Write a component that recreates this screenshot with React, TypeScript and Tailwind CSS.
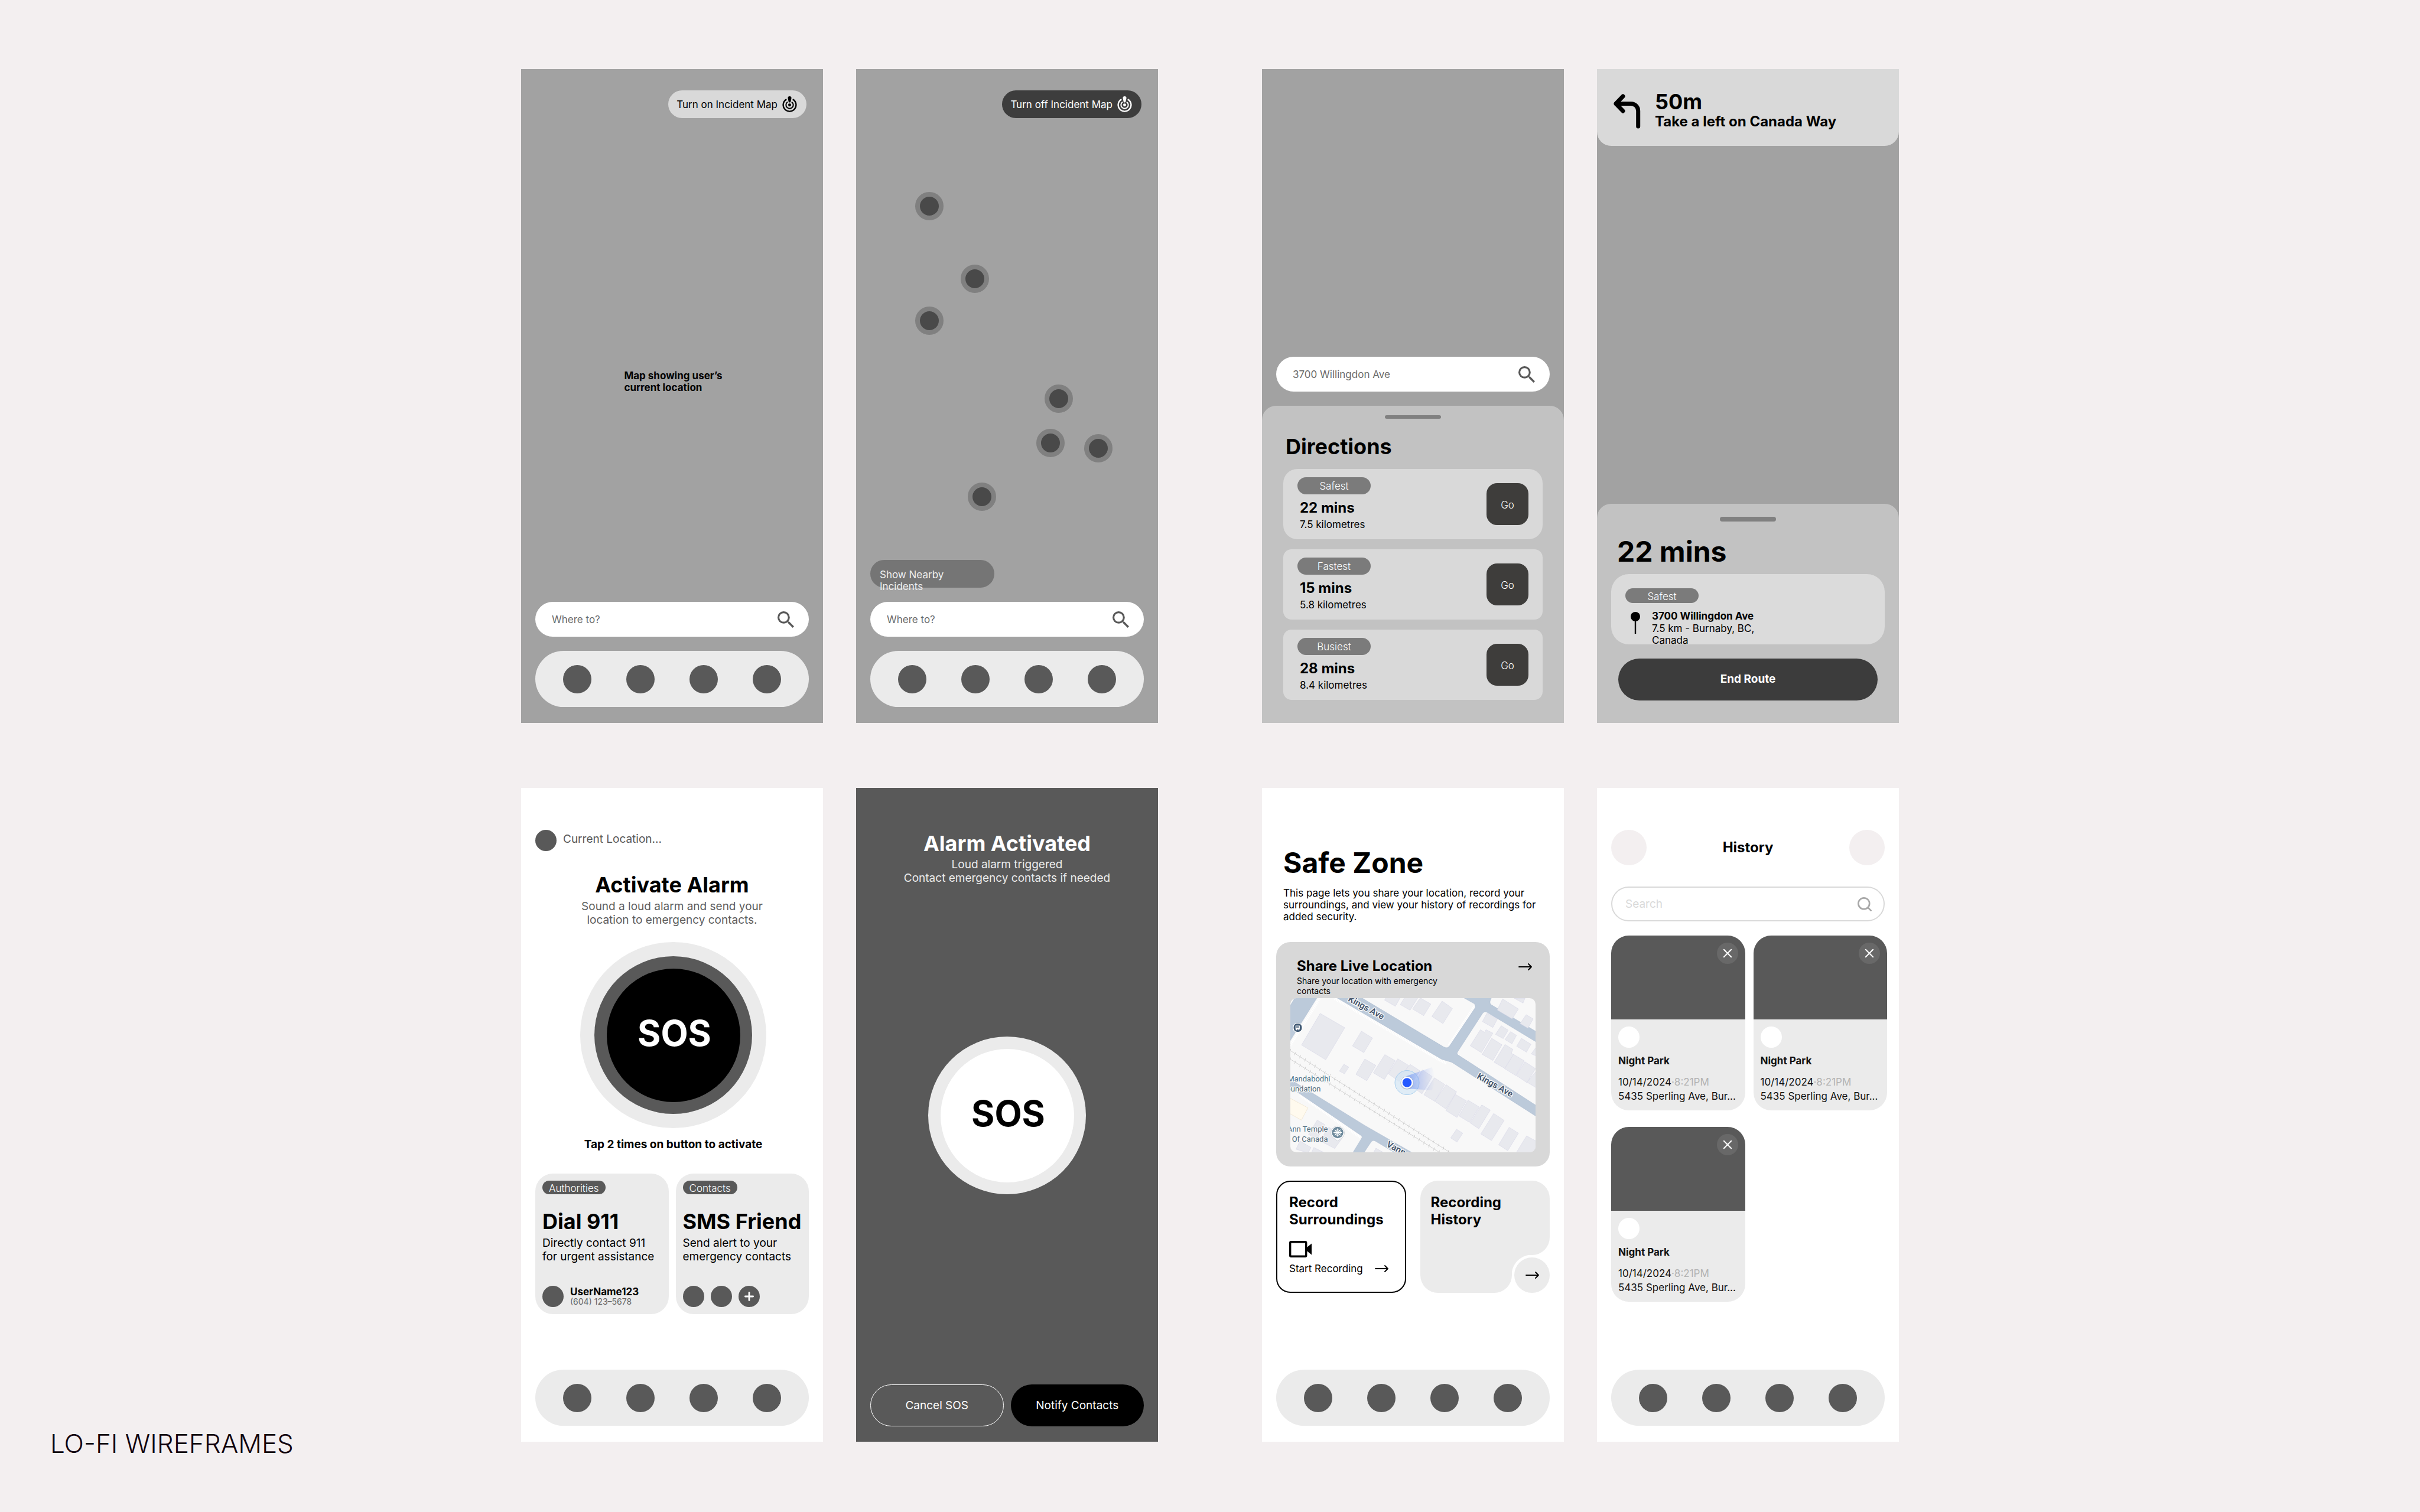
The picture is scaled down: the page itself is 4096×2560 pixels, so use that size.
import type { ReactNode } from "react";

function SearchIcon({ className }: { className: string }) {
  return (
    <svg viewBox="3 3 17.5 17.5" className={className} fill="currentColor" aria-hidden="true">
      <path d="M15.5 14h-.79l-.28-.27A6.47 6.47 0 0 0 16 9.5 6.5 6.5 0 1 0 9.5 16c1.61 0 3.09-.59 4.23-1.57l.27.28v.79l5 4.99L20.49 19l-4.99-5zm-6 0C7.01 14 5 11.99 5 9.5S7.01 5 9.5 5 14 7.01 14 9.5 11.99 14 9.5 14z" />
    </svg>
  );
}

function IncidentIcon() {
  return (
    <svg viewBox="-52 -62 104 114" className="h-[27px] w-[25px] shrink-0" fill="none" stroke="currentColor" aria-hidden="true">
      <path d="M22 -40.4A46 46 0 1 1 -22 -40.4" strokeWidth="10" />
      <path d="M14 -21.9A26 26 0 1 1 -14 -21.9" strokeWidth="8.5" />
      <circle r="10.5" fill="currentColor" stroke="none" />
      <path d="M-13 -49a13 12.5 0 0 1 26 0L7.5 -23q-1.5 5.500-7.500 5.500t-7.500-5.500z" fill="currentColor" stroke="none" />
    </svg>
  );
}

function ArrowRight() {
  return (
    <svg viewBox="0 0 23 12" className="h-3 w-[23px] shrink-0" fill="none" stroke="black" strokeWidth="1.8" strokeLinecap="round" strokeLinejoin="round" aria-hidden="true">
      <path d="M1 6h21M17 1l5 5-5 5" />
    </svg>
  );
}

function Pair({ children }: { children: ReactNode }) {
  return <div className="grid grid-cols-2 gap-14">{children}</div>;
}

function Phone({ label, tone, children }: { label: string; tone: string; children: ReactNode }) {
  return (
    <section aria-label={label} className={`relative flex min-h-[1107px] flex-col ${tone}`}>
      {children}
    </section>
  );
}

function NavBar() {
  return (
    <nav aria-label="Primary" className="flex h-[95px] items-center justify-between rounded-full bg-[#ebebeb] px-[47px]">
      {["Home", "Map", "Alarm", "Profile"].map((name) => (
        <button key={name} type="button" aria-label={name} className="size-12 rounded-full bg-[#595959]" />
      ))}
    </nav>
  );
}

function SearchBar({ value }: { value?: string }) {
  return (
    <div className="flex h-[59px] items-center gap-3 rounded-full bg-white pr-[25px] pl-[28px]">
      <input
        type="text"
        aria-label="Destination"
        placeholder="Where to?"
        defaultValue={value}
        className="w-full min-w-0 bg-transparent text-[17px] leading-5 text-[#6b6b6b] outline-none placeholder:text-[#6b6b6b]"
      />
      <button type="button" aria-label="Search" className="shrink-0 text-[#595959]">
        <SearchIcon className="size-7" />
      </button>
    </div>
  );
}

function IncidentToggle({ text, tone }: { text: string; tone: string }) {
  return (
    <div className="flex justify-end pt-9 pr-7">
      <button type="button" className={`flex h-[47px] items-center gap-2 rounded-full pr-4 pl-[14px] text-[17px] leading-5 ${tone}`}>
        {text}
        <IncidentIcon />
      </button>
    </div>
  );
}

const incidents = [
  { x: 124, y: 232 },
  { x: 201, y: 355 },
  { x: 124, y: 426 },
  { x: 343, y: 558 },
  { x: 329, y: 633 },
  { x: 410, y: 642 },
  { x: 213, y: 724 },
];

function MapScreen() {
  return (
    <Phone label="Map" tone="bg-[#a2a2a2]">
      <IncidentToggle text="Turn on Incident Map" tone="bg-[#d9d9d9] text-black" />
      <p className="mx-auto mt-[426px] pl-1 text-[17px] leading-5 font-bold">
        Map showing user’s
        <br />
        current location
      </p>
      <div className="mt-auto flex flex-col gap-6 px-6 pb-[27px]">
        <SearchBar />
        <NavBar />
      </div>
    </Phone>
  );
}

function IncidentScreen() {
  return (
    <Phone label="Incident map" tone="bg-[#a2a2a2]">
      <IncidentToggle text="Turn off Incident Map" tone="bg-[#3d3d3d] text-white" />
      {incidents.map((p) => (
        <span
          key={`${p.x}-${p.y}`}
          className="absolute size-12 -translate-1/2 rounded-full border-8 border-[#808080] bg-[#494949]"
          style={{ left: p.x, top: p.y }}
        />
      ))}
      <div className="mt-auto flex flex-col gap-6 px-6 pb-[27px]">
        <button type="button" className="h-[47px] w-[210px] rounded-full bg-[#757575] px-4 pt-[2px] text-left text-[17px] leading-5 text-[#efefef]">
          <span className="block h-5">
            Show Nearby
            <br />
            Incidents
          </span>
        </button>
        <SearchBar />
        <NavBar />
      </div>
    </Phone>
  );
}

function RouteTag({ children, className }: { children: ReactNode; className: string }) {
  return (
    <span className={`flex w-[124px] items-center justify-center rounded-full bg-[#7b7b7b] pt-[2px] text-[17px] leading-5 font-light text-white ${className}`}>
      {children}
    </span>
  );
}

function RouteCard({ tag, time, distance, round }: { tag: string; time: string; distance: string; round: string }) {
  return (
    <li className={`flex h-[119px] items-center justify-between bg-[#d9d9d9] px-6 ${round}`}>
      <div className="flex flex-col">
        <RouteTag className="h-[29px]">{tag}</RouteTag>
        <strong className="mt-2 pl-1 text-[24px] leading-[30px]">{time}</strong>
        <span className="pt-[1px] pl-1 text-[17px] leading-6">{distance}</span>
      </div>
      <button type="button" aria-label={`Go, ${tag}`} className="size-[71px] rounded-[18px] bg-[#3e3d3b] pt-[2px] text-[17px] leading-5 font-light text-white">
        Go
      </button>
    </li>
  );
}

function DirectionsScreen() {
  return (
    <Phone label="Directions" tone="bg-[#a2a2a2]">
      <div className="mt-auto px-6 pb-6">
        <SearchBar value="3700 Willingdon Ave" />
      </div>
      <div className="rounded-t-[24px] bg-[#c2c2c2] px-9 pt-4 pb-[39px]">
        <div className="mx-auto h-[6px] w-[95px] rounded-full bg-[#808080]" />
        <h2 className="mt-[25px] pl-1 text-[36px] leading-[44px] font-bold">Directions</h2>
        <ul className="mt-4 flex flex-col gap-[17px]">
          <RouteCard tag="Safest" time="22 mins" distance="7.5 kilometres" round="rounded-[24px]" />
          <RouteCard tag="Fastest" time="15 mins" distance="5.8 kilometres" round="rounded-[14px]" />
          <RouteCard tag="Busiest" time="28 mins" distance="8.4 kilometres" round="rounded-[14px]" />
        </ul>
      </div>
    </Phone>
  );
}

function NavigationScreen() {
  return (
    <Phone label="Navigation" tone="bg-[#a2a2a2]">
      <header className="flex h-[130px] items-center gap-6 rounded-b-[24px] bg-[#d9d9d9] pt-5 pr-6 pb-2 pl-7">
        <svg viewBox="0 0 46 59" className="h-[59px] w-[46px] shrink-0" fill="none" stroke="black" strokeWidth="7" strokeLinecap="round" strokeLinejoin="round" aria-label="Turn left">
          <path d="M16 4L4 16.500L16 29M4 16.500H29.500a12.200 12.200 0 0 1 12.200 12.200V55" />
        </svg>
        <div className="pb-[2px] font-bold">
          <p className="text-[36px] leading-[38px]">50m</p>
          <p className="text-[24px] leading-[30px]">Take a left on Canada Way</p>
        </div>
      </header>
      <div className="mt-auto rounded-t-[24px] bg-[#c2c2c2] px-6 pt-[22px] pb-[38px]">
        <div className="mx-auto h-[8px] w-[95px] rounded-full bg-[#808080]" />
        <h2 className="mt-[23px] pl-[10px] text-[48px] leading-[56px] font-bold">22 mins</h2>
        <div className="mt-[10px] h-[119px] rounded-[30px] bg-[#dbdbdb] px-6 pt-6">
          <RouteTag className="h-[25px]">Safest</RouteTag>
          <div className="mt-[11px] flex gap-[20px] pl-[9px]">
            <svg viewBox="0 0 16 40" className="mt-1 h-10 w-4 shrink-0" aria-hidden="true">
              <circle cx="8" cy="8" r="8" />
              <rect x="6.800" y="12" width="2.400" height="25" />
            </svg>
            <div className="w-[180px] text-[17px] leading-5">
              <strong className="block leading-[22px] whitespace-nowrap">3700 Willingdon Ave</strong>
              <p>7.5 km - Burnaby, BC, Canada</p>
            </div>
          </div>
        </div>
        <div className="px-3 pt-6">
          <button type="button" className="h-[71px] w-full rounded-full bg-[#3c3c3c] pb-[2px] text-[19px] leading-6 font-bold text-white">
            End Route
          </button>
        </div>
      </div>
    </Phone>
  );
}

function ActionCard({ tag, title, children, footer }: { tag: string; title: string; children: ReactNode; footer: ReactNode }) {
  return (
    <article className="flex h-[238px] flex-col items-start rounded-[30px] bg-[#ebebeb] p-3">
      <span className="flex h-[23px] items-center rounded-full bg-[#595959] px-[11px] pt-[2px] text-[17px] leading-5 font-light text-white">{tag}</span>
      <h3 className="mt-6 text-[36px] leading-[44px] font-bold whitespace-nowrap">{title}</h3>
      <p className="mt-[3px] text-[19px] leading-[23px] whitespace-nowrap">{children}</p>
      <div className="mt-auto flex items-center gap-[11px]">{footer}</div>
    </article>
  );
}

function AlarmScreen() {
  return (
    <Phone label="Activate alarm" tone="bg-white">
      <div className="flex gap-[11px] pt-[71px] pl-6">
        <span className="size-9 rounded-full bg-[#595959]" />
        <p className="pt-1 text-[19px] leading-6 text-[#595959]">Current Location...</p>
      </div>
      <div className="mt-[35px] text-center">
        <h2 className="text-[36px] leading-[44px] font-bold">Activate Alarm</h2>
        <p className="mt-[3px] text-[19px] leading-[23px] text-[#5e5e5e]">
          Sound a loud alarm and send your
          <br />
          location to emergency contacts.
        </p>
      </div>
      <div className="mt-[26px] flex flex-col items-center pl-1">
        <button type="button" className="flex size-[315px] items-center justify-center rounded-full bg-[#ebebeb]">
          <span className="flex size-[267px] items-center justify-center rounded-full bg-[#595959]">
            <span className="flex size-[226px] items-center justify-center rounded-full bg-black pb-2 pl-1 text-[60px] font-bold text-white">
              SOS
            </span>
          </span>
        </button>
        <p className="mt-4 text-[19px] leading-6 font-bold">Tap 2 times on button to activate</p>
      </div>
      <div className="mt-[37px] grid grid-cols-2 gap-3 px-6">
        <ActionCard
          tag="Authorities"
          title="Dial 911"
          footer={
            <>
              <span className="size-9 rounded-full bg-[#595959]" />
              <div>
                <p className="text-[17px] leading-[18px] font-bold">UserName123</p>
                <p className="text-[14px] leading-4 text-[#666666]">(604) 123–5678</p>
              </div>
            </>
          }
        >
          Directly contact 911
          <br />
          for urgent assistance
        </ActionCard>
        <ActionCard
          tag="Contacts"
          title="SMS Friend"
          footer={
            <>
              <span className="size-9 rounded-full bg-[#595959]" />
              <span className="size-9 rounded-full bg-[#595959]" />
              <button type="button" aria-label="Add contact" className="flex size-9 items-center justify-center rounded-full bg-[#595959]">
                <svg viewBox="0 0 16 16" className="size-4" stroke="white" strokeWidth="2.800" strokeLinecap="round" aria-hidden="true">
                  <path d="M8 1.400v13.200M1.400 8h13.200" />
                </svg>
              </button>
            </>
          }
        >
          Send alert to your
          <br />
          emergency contacts
        </ActionCard>
      </div>
      <div className="mt-auto px-6 pb-[27px]">
        <NavBar />
      </div>
    </Phone>
  );
}

function AlarmActivatedScreen() {
  return (
    <Phone label="Alarm activated" tone="bg-[#595959]">
      <div className="pt-[72px] text-center text-white">
        <h2 className="text-[36px] leading-[44px] font-bold">Alarm Activated</h2>
        <p className="mt-[2px] text-[19px] leading-[23px] text-[#ebebeb]">
          Loud alarm triggered
          <br />
          Contact emergency contacts if needed
        </p>
      </div>
      <div className="mt-[257px] flex justify-center">
        <div className="flex size-[267px] items-center justify-center rounded-full bg-[#ebebeb]">
          <div className="flex size-[226px] items-center justify-center rounded-full bg-white pb-2 pl-1 text-[60px] font-bold text-black">
            SOS
          </div>
        </div>
      </div>
      <div className="mt-auto grid grid-cols-2 gap-3 px-6 pb-[26px] text-[19px] leading-6 text-white">
        <button type="button" className="h-[71px] rounded-full border border-white">
          Cancel SOS
        </button>
        <button type="button" className="h-[71px] rounded-full bg-black">
          Notify Contacts
        </button>
      </div>
    </Phone>
  );
}

const buildings = [
  "302,364 426,422 330,552 208,492",
  "510,436 566,464 522,523 465,496",
  "527,549 583,575 537,637 482,611",
  "422,570 446,582 424,609 399,598",
  "628,531 681,556 626,632 570,605",
  "693,548 748,575 700,640 646,609",
  "756,571 806,597 760,650 706,620",
  "817,593 867,620 815,690 768,662",
  "878,625 930,652 880,721 825,694",
  "937,653 990,682 936,752 880,720",
  "983,692 1040,719 992,786 936,758",
  "1048,716 1105,744 1055,806 1002,780",
  "1117,735 1160,756 1102,832 1058,808",
  "1177,770 1230,798 1166,880 1112,853",
  "1255,826 1302,850 1248,921 1202,897",
  "990,834 1021,850 992,886 960,869",
  "1343,861 1400,886 1372,940 1290,930",
  "640,290 706,300 681,335 627,310",
  "735,290 795,300 755,351 706,328",
  "807,301 860,326 824,373 768,346",
  "917,314 969,344 921,405 865,376",
  "1222,305 1302,346 1270,386 1195,350",
  "1280,302 1335,302 1325,322",
  "1341,369 1376,386 1350,424 1310,405",
  "1143,363 1196,386 1173,421 1120,397",
  "1215,414 1250,432 1225,466 1186,449",
  "1262,438 1292,453 1269,487 1234,470",
  "1317,465 1365,489 1342,521 1293,497",
  "1400,490 1400,540 1367,528",
  "1110,430 1131,441 1138,430 1173,444 1115,523 1059,495",
  "1167,465 1219,491 1173,555 1119,530",
  "1234,490 1274,510 1266,525 1278,532 1235,588 1179,562",
  "1277,530 1331,556 1288,616 1232,588",
  "1334,560 1388,588 1345,645 1291,616",
  "1400,590 1400,670 1345,643",
  "287,797 325,815 285,875 243,855",
  "345,826 420,862 375,912 300,880",
  "200,882 256,908 240,930 180,915",
  "270,908 320,928 255,935",
  "583,911 620,928 570,930",
];

function LocationMap() {
  return (
    <svg viewBox="0 0 416 261" preserveAspectRatio="xMidYMid slice" className="block h-[261px] w-full rounded-[10px] bg-[#f8f8f8]" role="img" aria-label="Map around Kings Ave">
      <defs>
        <linearGradient id="beam" x1="0" x2="1" y1="0" y2="0">
          <stop offset="0" stopColor="#5b83f5" stopOpacity="0.6" />
          <stop offset="1" stopColor="#8fa8f0" stopOpacity="0" />
        </linearGradient>
      </defs>
      <g transform="scale(0.3356 0.41725) translate(-150 -302)">
        <g fill="none" stroke="#ffffff" strokeWidth="12" strokeDasharray="5 3">
          <path d="M375 304L912 556L940 566M1080 335L950 496" />
          <path d="M995 535L1388 748M300 302L150 495M200 695L506 868" />
        </g>
        <g fill="#bccada" stroke="#a9bacf" strokeWidth="1.500">
          <path d="M385 300L915 550L965 562L1392 782V738L995 531Q990 526 995 520L1120 365Q1130 353 1145 360L1392 480V438L1163 328Q1152 320 1166 300H1025L1080 325Q1088 333 1082 343L955 495Q945 508 925 500L510 300Z" />
          <path d="M175 300H286L148 478V336Z" />
          <path d="M148 630L530 820L768 930H680L578 881Q568 877 560 884L522 930H466L513 868Q515 862 506 858L148 662Z" />
        </g>
        <g fill="#e8e9ee" stroke="#d4d5e6" strokeWidth="1.500">
          {buildings.map((points) => (
            <polygon key={points} points={points} />
          ))}
        </g>
        <polygon points="148,707 240,747 207,797 148,770" fill="#fffaee" stroke="#eadcc0" strokeWidth="1.500" />
        <g fill="none" stroke="#c4c4c4">
          <path d="M150 514L960 930M150 549L908 930" strokeWidth="2" />
          <path d="M150 514L960 930M150 549L908 930" strokeWidth="14" strokeDasharray="2 26" />
        </g>
      </g>
      <circle cx="198" cy="143" r="20.500" fill="#cfe4f5" fillOpacity="0.600" stroke="#a6cdee" />
      <path d="M197 132L240 117Q250 138 240 156L197 153Z" fill="url(#beam)" />
      <circle cx="198" cy="143.500" r="11" fill="#8a93a5" fillOpacity="0.500" />
      <circle cx="198" cy="143" r="10.200" fill="white" />
      <circle cx="198" cy="143" r="7.800" fill="#2559ff" />
      <g stroke="#f8f8f8" strokeWidth="3" strokeLinejoin="round" style={{ paintOrder: "stroke" }} className="font-[Roboto,sans-serif]">
        <g fill="#43546c" fontSize="15" fontWeight="600" textAnchor="middle">
          <text x="129" y="21" transform="rotate(29 129 16)">Kings Ave</text>
          <text x="347" y="152" transform="rotate(29 347 147)">Kings Ave</text>
          <text x="190" y="265" transform="rotate(29 190 260)">Vanness</text>
        </g>
        <g fill="#4c6b80" fontSize="13" textAnchor="end">
          <text x="68" y="141">Mandabodhi</text>
          <text x="52" y="158">Foundation</text>
          <text x="64" y="226">Ann Temple</text>
          <text x="64" y="243">Of Canada</text>
        </g>
      </g>
      <rect x="5.500" y="42.500" width="15" height="15" rx="6.500" fill="#3f5873" stroke="white" strokeWidth="1.200" />
      <path d="M9.200 46.500h7.200v6.500h-1v1.200h-1.200v-1.200h-2.800v1.200h-1.200v-1.200h-1zM10.400 47.700v2h4.800v-2z" fill="white" fillRule="evenodd" />
      <path d="M69 228a11.500 11.500 0 1 1 23 0q0 6-7 10.500l-4.500 3.500-4.500-3.500q-7-4.500-7-10.500z" fill="white" stroke="#c8ccd2" strokeWidth="0.800" />
      <circle cx="80.500" cy="227.500" r="9.700" fill="#6f8a9c" />
      <g stroke="white" fill="none" strokeWidth="1.200">
        <circle cx="80.500" cy="227.500" r="4.600" />
        <path d="M80.500 220.500v14M73.500 227.500h14M75.600 222.600l9.800 9.800M85.400 222.600l-9.800 9.800" />
      </g>
      <circle cx="80.500" cy="227.500" r="1.500" fill="white" />
    </svg>
  );
}

function SafeZoneScreen() {
  return (
    <Phone label="Safe zone" tone="bg-white">
      <div className="px-9 pt-[99px]">
        <h2 className="text-[48px] leading-[56px] font-bold">Safe Zone</h2>
        <p className="mt-[13px] text-[17px] leading-5 whitespace-nowrap">
          This page lets you share your location, record your
          <br />
          surroundings, and view your history of recordings for
          <br />
          added security.
        </p>
      </div>
      <div className="px-6 pt-[33px]">
        <article className="rounded-[24px] bg-[#d8d8d8] px-6 pt-[26px] pb-6">
          <div className="flex items-start justify-between pr-[6px] pl-[11px]">
            <div>
              <h3 className="text-[24px] leading-[30px] font-bold">Share Live Location</h3>
              <p className="mt-[1px] w-[270px] text-[14px] leading-[17px]">Share your location with emergency contacts</p>
            </div>
            <a href="#share" aria-label="Share live location" className="pt-[10px]">
              <ArrowRight />
            </a>
          </div>
          <div className="mt-1">
            <LocationMap />
          </div>
        </article>
        <div className="mt-6 grid grid-cols-2 gap-6">
          <article className="h-[190px] rounded-[24px] border-2 border-black px-5 pt-5">
            <h3 className="text-[24px] leading-[29px] font-bold">
              Record
              <br />
              Surroundings
            </h3>
            <svg viewBox="0 0 38 28" className="mt-[22px] h-7 w-[38px]" aria-hidden="true">
              <rect x="1.700" y="1.700" width="27" height="24.600" rx="1.500" fill="none" stroke="black" strokeWidth="3.400" />
              <path d="M38 4.500v19l-8-6.500v-6z" />
            </svg>
            <a href="#record" className="mt-[7px] flex items-center gap-5 text-[17px] leading-6 whitespace-nowrap">
              Start Recording
              <ArrowRight />
            </a>
          </article>
          <article className="grid h-[190px] grid-cols-[1fr_64px] grid-rows-[126px_64px]">
            <h3 className="col-span-2 rounded-[30px] rounded-bl-none bg-[#ebebeb] pt-[22px] pl-[18px] text-[24px] leading-[29px] font-bold">
              Recording
              <br />
              History
            </h3>
            <div className="rounded-b-[30px] bg-[#ebebeb]" />
            <div className="flex items-end justify-end bg-[radial-gradient(circle_at_34px_34px,transparent_34px,#ebebeb_35px)] bg-[length:34px_34px] bg-no-repeat">
              <a href="#history" aria-label="Recording history" className="flex size-[60px] items-center justify-center rounded-full bg-[#ebebeb]">
                <ArrowRight />
              </a>
            </div>
          </article>
        </div>
      </div>
      <div className="mt-auto px-6 pb-[27px]">
        <NavBar />
      </div>
    </Phone>
  );
}

function RecordingCard() {
  return (
    <li className="overflow-hidden rounded-[30px] bg-[#ebebeb] text-[#111111]">
      <div className="flex h-[142px] items-start justify-end bg-[#595959] p-3">
        <button type="button" aria-label="Delete recording" className="flex size-9 items-center justify-center rounded-full bg-[#686868]">
          <svg viewBox="0 0 16 16" className="size-4" stroke="white" strokeWidth="2" strokeLinecap="round" aria-hidden="true">
            <path d="M1.800 1.800l12.400 12.400M14.200 1.800L1.800 14.200" />
          </svg>
        </button>
      </div>
      <div className="p-3 text-[17px] leading-6 whitespace-nowrap">
        <span className="block size-9 rounded-full bg-white" />
        <h3 className="mt-[10px] font-bold">Night Park</h3>
        <p className="mt-3">
          10/14/2024<span className="text-[#b3b3b3]">·8:21PM</span>
        </p>
        <p>5435 Sperling Ave, Bur...</p>
      </div>
    </li>
  );
}

function HistoryScreen() {
  return (
    <Phone label="History" tone="bg-white">
      <header className="flex items-center justify-between px-6 pt-[71px]">
        <button type="button" aria-label="Back" className="size-[60px] rounded-full bg-[#f3eff0]" />
        <h2 className="text-[24px] leading-[30px] font-bold">History</h2>
        <button type="button" aria-label="Menu" className="size-[60px] rounded-full bg-[#f3eff0]" />
      </header>
      <div className="mt-9 px-6">
        <div className="flex h-[59px] items-center rounded-full border-2 border-[#d9d9d9] pr-[20px] pl-[22px]">
          <input
            type="search"
            aria-label="Search recordings"
            placeholder="Search"
            className="w-full min-w-0 bg-transparent text-[19px] leading-6 outline-none placeholder:text-[#d9d9d9]"
          />
          <svg viewBox="0 0 24 24" className="size-6 shrink-0" fill="none" stroke="#a8a8a8" strokeWidth="2.700" strokeLinecap="round" aria-hidden="true">
            <circle cx="10.800" cy="10.800" r="9.400" />
            <path d="M17.800 17.800l4.800 4.800" />
          </svg>
        </div>
        <ul className="mt-6 -mr-1 grid grid-cols-2 gap-x-[14px] gap-y-7">
          <RecordingCard />
          <RecordingCard />
          <RecordingCard />
        </ul>
      </div>
      <div className="mt-auto px-6 pb-[27px]">
        <NavBar />
      </div>
    </Phone>
  );
}

export default function App() {
  return (
    <main className="grid min-h-screen grid-cols-[1fr_minmax(0,2332px)_1fr] bg-[#f3eff0] pt-[117px] font-[Inter,sans-serif] text-black">
      <h1 className="self-end pb-[88px] pl-[85px] text-[44px] leading-[56px] font-light text-[#12020e]">LO-FI WIREFRAMES</h1>
      <div className="flex flex-col gap-[110px] pb-[119px]">
        <div className="grid grid-cols-2 gap-[176px]">
          <Pair>
            <MapScreen />
            <IncidentScreen />
          </Pair>
          <Pair>
            <DirectionsScreen />
            <NavigationScreen />
          </Pair>
        </div>
        <div className="grid grid-cols-2 gap-[176px]">
          <Pair>
            <AlarmScreen />
            <AlarmActivatedScreen />
          </Pair>
          <Pair>
            <SafeZoneScreen />
            <HistoryScreen />
          </Pair>
        </div>
      </div>
    </main>
  );
}
